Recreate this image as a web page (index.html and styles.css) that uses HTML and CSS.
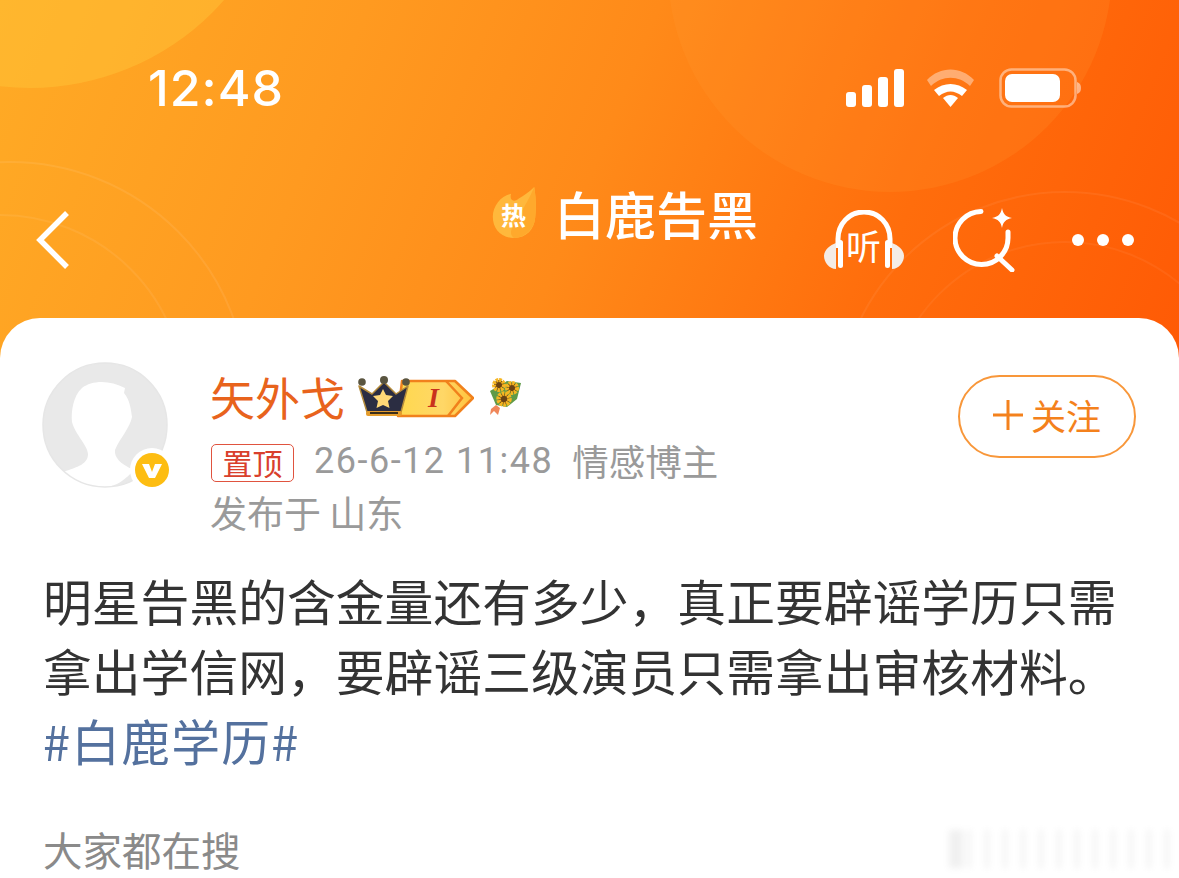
FILE: index.html
```html
<!DOCTYPE html>
<html lang="zh-CN">
<head>
<meta charset="utf-8">
<title>白鹿告黑</title>
<link rel="stylesheet" href="styles.css">
</head>
<body>
<div class="page">
  <header class="hero">
    <svg class="hero-bg" width="1179" height="360" viewBox="0 0 1179 360" aria-hidden="true">
      <circle cx="30" cy="-170" r="258" fill="#ffc83c" fill-opacity=".42"/>
      <circle cx="890" cy="-30" r="222" fill="#ff9a30" fill-opacity=".2"/>
      <circle cx="10" cy="400" r="238" fill="none" stroke="#fff" stroke-opacity=".08" stroke-width="2"/>
      <circle cx="0" cy="400" r="185" fill="none" stroke="#fff" stroke-opacity=".07" stroke-width="2"/>
      <circle cx="1065" cy="420" r="228" fill="none" stroke="#fff" stroke-opacity=".06" stroke-width="2"/>
      <circle cx="1065" cy="420" r="178" fill="none" stroke="#fff" stroke-opacity=".05" stroke-width="2"/>
    </svg>
    <div class="status">
      <span class="time">12:48</span>
      <div class="status-icons">
        <svg class="signal" width="58" height="38" viewBox="0 0 58 38"><rect x="0" y="23" width="10" height="15" rx="3"/><rect x="16" y="16" width="10" height="22" rx="3"/><rect x="32" y="8" width="10" height="30" rx="3"/><rect x="48" y="0" width="10" height="38" rx="3"/></svg>
        <svg class="wifi" width="50" height="38" viewBox="0 0 50 38"><path d="M1 11C14 -3 35 -3 48 11L44 17C33 6 16 6 5 17Z" fill="#fff" fill-opacity=".4"/><path d="M8 21C18 13 31 13 41 21L36 27C28 21 21 21 13 27Z" fill="#fff"/><path d="M17 29C22 25 27 25 32 29L24.500 38Z" fill="#fff"/></svg>
        <svg class="battery" width="83" height="40" viewBox="0 0 83 40"><rect x="1.500" y="1.500" width="75" height="37" rx="11" fill="none" stroke="#fff" stroke-opacity=".45" stroke-width="2.500"/><rect x="6" y="6" width="55" height="28" rx="7" fill="#fff"/><path d="M78 14C81 15 82 17 82 20C82 23 81 25 78 26Z" fill="#fff" fill-opacity=".5"/></svg>
      </div>
    </div>
    <nav class="nav">
      <svg class="back" width="34" height="58" viewBox="0 0 34 58"><path d="M31 2L4 29L31 56" fill="none" stroke="#fff" stroke-width="5.500"/></svg>
      <div class="title">
        <span class="hot"><svg width="46" height="52" viewBox="0 0 46 54"><path d="M23 53C9 53 1 43 1 31C1 19 10 9 20 7C18 13 22 17 28 12C33 9 39 5 44 0C46 12 46 22 45 32C44 44 36 53 23 53Z" fill="#ffb83c"/><path d="M23 53C34 53 44 44 45 32C46 22 46 12 44 0C40 10 34 20 28 30C22 40 16 48 23 53Z" fill="#ffa92c"/></svg><span class="hot-text">热</span></span>
        <h1 class="title-text">白鹿告黑</h1>
      </div>
      <div class="actions">
        <div class="listen">
          <svg width="80" height="60" viewBox="0 0 80 60"><path d="M14 38V29C14 14 25 2 40 2C55 2 66 14 66 29V38" fill="none" stroke="#fff" stroke-width="5"/><path d="M12 33V59C5 59 0 52 0 46C0 40 6 35 12 33Z" fill="#f4ece6"/><path d="M68 33V59C75 59 80 52 80 46C80 40 74 35 68 33Z" fill="#f4ece6"/><rect x="14" y="30" width="5" height="28" rx="2.500" fill="#fff"/><rect x="61" y="30" width="5" height="28" rx="2.500" fill="#fff"/></svg>
          <span class="listen-text">听</span>
        </div>
        <svg class="search" width="64" height="64" viewBox="0 0 64 64"><path d="M28 3.500A26.500 26.500 0 1 0 55 30V24" fill="none" stroke="#fff" stroke-width="5" stroke-linecap="round"/><path d="M44 48L59 62" stroke="#fff" stroke-width="5" stroke-linecap="round"/><path d="M49 0C50 6 53 9 59 10C53 11 50 14 49 20C48 14 45 11 39 10C45 9 48 6 49 0Z" fill="#fff"/></svg>
        <div class="dots"><i></i><i></i><i></i></div>
      </div>
    </nav>
  </header>

  <main class="card">
    <section class="author">
      <div class="avatar">
        <svg width="126" height="126" viewBox="0 0 126 126"><circle cx="63" cy="63" r="62" fill="#e9e9e9"/><path d="M30 60C29 50 31 34 40 26C50 18 68 18 83 26L82 31C88 38 89 48 90 55C88 66 78 76 73 88C72 95 78 102 92 108C84 117 74 125 63 125C45 125 30 119 21 110C36 105 46 102 46 92C46 84 33 72 30 60Z" fill="#fff"/><circle cx="63" cy="63" r="62" fill="none" stroke="#e6e6e6" stroke-width="1.500"/></svg>
        <span class="badge"><svg width="34" height="34" viewBox="0 0 34 34"><circle cx="17" cy="17" r="17" fill="#fdbd12"/><path d="M7 11H14L17 19L20 11H27L20 25H14Z" fill="#fff"/></svg></span>
      </div>
      <div class="info">
        <div class="name-row">
          <span class="name">矢外戈</span>
          <div class="vip">
            <svg class="crown" width="116" height="42" viewBox="0 0 116 42"><defs><linearGradient id="rib" x1="0" y1="0" x2="1" y2="0"><stop offset="0" stop-color="#ffd84e"/><stop offset=".6" stop-color="#ffd767"/><stop offset="1" stop-color="#ffc23c"/></linearGradient></defs><path d="M44 5H97L115 22L97 40H40Z" fill="url(#rib)" stroke="#f1811c" stroke-width="2.500" stroke-linejoin="round"/><path d="M88 5L104 22L90 40" fill="none" stroke="#f1811c" stroke-width="2.500"/><path d="M1 10L14 18L26 6L38 18L50 10L43 36H9Z" fill="#2b2d42" stroke="#b48a3a" stroke-width="1.500" stroke-linejoin="round"/><circle cx="4" cy="6" r="3.800" fill="#5a5540"/><circle cx="26" cy="4" r="4" fill="#5a5540"/><circle cx="48" cy="6" r="3.800" fill="#5a5540"/><path d="M25 13L28 19L35 20L30 25L31.500 32L25 29L18.500 32L20 25L15 20L22 19Z" fill="#ffd877"/><rect x="8" y="35" width="36" height="5" rx="2" fill="#e49c2c"/><rect x="12" y="36" width="28" height="2" fill="#3a2d18"/></svg>
            <span class="vip-level">I</span>
          </div>
          <svg class="flowers" width="36" height="40" viewBox="0 0 36 40"><path d="M4 32L9 28L13 31L11 38L7 34L3 38Z" fill="#f0875a"/><path d="M3 14L9 28L20 30L30 22L34 6L20 4Z" fill="#5f9a48"/><circle cx="12" cy="8" r="5" fill="#6b4314" stroke="#f6b622" stroke-width="4" stroke-dasharray="2.500 .8"/><circle cx="25" cy="11" r="5" fill="#6b4314" stroke="#f6b622" stroke-width="4" stroke-dasharray="2.500 .8"/><circle cx="17" cy="22" r="5.500" fill="#6b4314" stroke="#f6b622" stroke-width="4.500" stroke-dasharray="2.500 .8"/></svg>
        </div>
        <div class="meta-row">
          <span class="pin">置顶</span>
          <span class="date">26-6-12 11:48</span>
          <span class="role">情感博主</span>
        </div>
        <div class="location">发布于 山东</div>
      </div>
      <button class="follow"><svg class="plus" width="30" height="32" viewBox="0 0 30 32"><path d="M0 16H30M15 1V31" fill="none" stroke="#f4811c" stroke-width="3"/></svg><span>关注</span></button>
    </section>
    <p class="post">明星告黑的含金量还有多少，真正要辟谣学历只需拿出学信网，要辟谣三级演员只需拿出审核材料。<a class="tag">#白鹿学历#</a></p>
    <div class="search-row">
      <h2 class="search-label">大家都在搜</h2>
      <div class="watermark"></div>
    </div>
  </main>
</div>
</body>
</html>
```
FILE: styles.css
```css
* { box-sizing: border-box; }
html, body { margin: 0; padding: 0; background: #fff; }
body { font-family: "Noto Sans CJK SC", "Noto Sans", sans-serif; }
.page { width: 1179px; height: 878px; overflow: hidden; position: relative; }

.hero {
  position: relative;
  height: 358px;
  padding: 60px 43px 0 36px;
  background: linear-gradient(112deg, #ffab25 0%, #ff9a20 28%, #ff8a19 50%, #ff6d0c 75%, #ff5a05 100%);
  overflow: hidden;
}
.hero-bg { position: absolute; left: 0; top: 0; }
.status, .nav { position: relative; }
.status { display: flex; align-items: center; justify-content: space-between; height: 56px; padding-left: 112px; }
.time { font-family: Inter, Roboto, sans-serif; font-weight: 500; font-size: 50px; letter-spacing: 1px; line-height: 56px; color: #fff; }
.status-icons { display: flex; align-items: center; gap: 22px; margin-right: 54px; }
.signal { fill: #fff; display: block; }
.wifi, .battery { display: block; }
.status-icons .battery { margin-left: 1px; }

.nav { display: flex; align-items: center; height: 80px; margin-top: 84px; }
.back { display: block; flex: none; }
.title { display: flex; align-items: center; margin-left: 421px; gap: 17px; position: relative; top: -27px; }
.hot { position: relative; width: 46px; height: 52px; display: block; }
.hot svg { display: block; }
.hot-text { position: absolute; left: 10px; top: 12px; font-size: 25px; line-height: 30px; color: #fff; font-weight: 700; }
.title-text { margin: 0; font-size: 51px; line-height: 60px; font-weight: 500; color: #fff; white-space: nowrap; }
.actions { display: flex; align-items: center; margin-left: 66px; }
.listen { position: relative; width: 80px; height: 60px; }
.listen svg { display: block; }
.listen-text { position: absolute; left: 22px; top: 14px; font-size: 35px; line-height: 42px; font-weight: 400; color: #fff; }
.search { display: block; margin-left: 49px; }
.dots { display: flex; gap: 13px; margin-left: 55px; }
.dots i { width: 12px; height: 12px; border-radius: 50%; background: #fff; display: block; }

.card { position: absolute; left: 0; right: 0; top: 318px; height: 560px; background: #fff; border-radius: 40px 40px 0 0; padding: 44px 43px 0; }
.author { display: flex; align-items: flex-start; }
.avatar { position: relative; flex: none; width: 126px; height: 126px; margin-left: -1px; }
.avatar svg { display: block; }
.badge { position: absolute; right: -6px; bottom: -4px; padding: 5px; background: #fff; border-radius: 50%; display: block; width: 44px; height: 44px; }
.info { margin-left: 42px; flex: none; width: 700px; }
.name-row { display: flex; align-items: center; height: 58px; margin-top: 6px; }
.name { font-size: 45px; line-height: 58px; color: #e8631c; white-space: nowrap; }
.vip { position: relative; width: 116px; height: 42px; margin-left: 13px; }
.crown { display: block; }
.vip-level { position: absolute; left: 70px; top: 4px; font-family: "Liberation Serif", serif; font-weight: 700; font-style: italic; font-size: 28px; line-height: 36px; color: #c9321c; }
.flowers { margin-left: 13px; display: block; }
.meta-row { display: flex; align-items: center; height: 40px; margin-top: 17px; color: #9a9a9a; font-size: 36.500px; }
.pin { width: 83px; height: 38px; margin-left: 1px; border: 1.500px solid #e0533f; border-radius: 5px; color: #d9402c; font-size: 30px; line-height: 34px; text-align: center; white-space: nowrap; }
.date { margin: 0 0 4px 20px; font-family: Roboto, sans-serif; font-size: 36px; letter-spacing: 1.500px; line-height: 40px; white-space: nowrap; }
.role { margin: 0 0 4px 19px; line-height: 40px; white-space: nowrap; }
.location { font-size: 37px; line-height: 52px; color: #9a9a9a; margin-top: 3px; white-space: nowrap; }
.follow { position: absolute; left: 958px; top: 57px; width: 178px; height: 83px; border: 2px solid #f8973a; border-radius: 42px; background: #fff; color: #f4811c; font-family: inherit; font-size: 35px; line-height: 44px; padding: 0 0 4px; white-space: nowrap; display: flex; align-items: center; justify-content: center; gap: 8px; }
.plus { display: block; }
.post { margin: 27px 0 0; width: 1090px; font-size: 48.800px; line-height: 70px; color: #333; }
.tag { display: block; color: #54719e; letter-spacing: 1.200px; }
.search-row { margin-top: 46px; display: flex; justify-content: space-between; align-items: center; height: 56px; margin-right: -43px; }
.search-label { margin: 0; font-size: 39.500px; line-height: 56px; font-weight: 400; color: #8a8a8a; }
.watermark { width: 230px; height: 38px; opacity: .12; filter: blur(3px); background: linear-gradient(90deg, #888 0 14px, transparent 14px 24px), repeating-linear-gradient(90deg, #999 0 4px, transparent 4px 18px); }
```
